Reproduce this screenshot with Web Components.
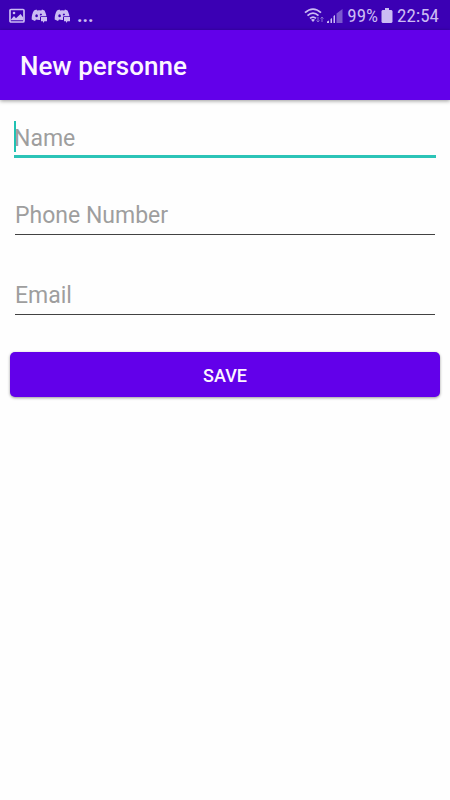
<!DOCTYPE html>
<html lang="en">
<head>
<meta charset="utf-8">
<meta name="viewport" content="width=device-width, initial-scale=1">
<title>New personne</title>
<style>
  body { margin: 0; min-height: 100vh; background: #fefefe; font-family: Roboto, "Noto Sans", sans-serif; }
</style>
</head>
<body>
<contact-screen></contact-screen>
<script>
const define = (name, html, setup) => customElements.define(name, class extends HTMLElement {
  constructor() {
    super();
    const t = document.createElement('template');
    t.innerHTML = html;
    this.attachShadow({ mode: 'open' }).append(t.content.cloneNode(true));
  }
  connectedCallback() { if (setup) setup(this, this.shadowRoot); }
});

define('chat-icon', `
  <style>:host { display: block; } svg { display: block; }</style>
  <svg width="17" height="14" viewBox="0 0 17 14" aria-hidden="true">
    <path fill="#cbbcf3" fill-rule="evenodd" d="M5.4 .5 3 1.4C1.5 3.600.6 6.700.7 10.400l3.300 1.700 1-1.500c1.400.4 2.700.5 4 .4V8.500C9 7.700 9.600 7.200 10.400 7.200h5C15.200 5.200 14.500 3.400 13.500 1.400L11 .5l-.7 1.100a10 10 0 0 0-4.200 0zM5.600 5.300a1.300 1.500 0 1 0 0 3 1.300 1.500 0 0 0 0-3zM10 4.600a1.200 1.300 0 0 0-1 2l2-.7A1.300 1.300 0 0 0 10 4.600z"/>
    <path fill="#cbbcf3" d="M10 8H16v4.200h-2.500L12 14v-1.800H10z"/>
  </svg>`);

define('status-bar', `
  <style>
    :host { display: flex; align-items: center; justify-content: space-between; box-sizing: border-box; height: 30px; padding: 1px 11px 0 9px; background: #3b00b4; color: #cbbcf3; font-family: "Roboto Condensed", Roboto, sans-serif; font-size: 19px; line-height: 20px; }
    .side { display: flex; align-items: center; }
    .left { gap: 6px; }
    .dots { font-weight: 700; }
    svg { display: block; }
    .signal { margin: 0 4px 0 2px; }
    .battery { margin: 0 4px 0 3px; }
  </style>
  <div class="side left">
    <svg width="16" height="16" viewBox="0 0 16 16" aria-hidden="true">
      <rect x="1" y="1.500" width="14" height="12.500" rx="1" fill="none" stroke="#cbbcf3" stroke-width="1.700"/>
      <path fill="#cbbcf3" d="M2 11.500 5 8l2 2.300L11.500 6l2.700 3.500V12.300H2z"/>
      <circle cx="5" cy="5" r="1.300" fill="#cbbcf3"/>
    </svg>
    <chat-icon></chat-icon>
    <chat-icon></chat-icon>
    <span class="dots">...</span>
  </div>
  <div class="side">
    <svg width="21" height="16" viewBox="0 0 21 16" aria-hidden="true" fill="none" stroke="#cbbcf3">
      <path stroke-width="1.800" d="M1 4.700Q9 -2.500 17 4.700M3.500 7.600Q9 2.700 14.500 7.600M6 10.400Q9 7.800 12 10.400"/>
      <path fill="#cbbcf3" stroke="none" d="m7 11.800q2-1.500 4 0L9 14z"/>
      <path stroke="#886bd4" stroke-width="1" d="M14 9v5M12.500 12.500 14 14l1.500-1.500M18 14V9M16.500 10.500 18 9l1.500 1.500"/>
    </svg>
    <svg class="signal" width="16" height="16" viewBox="0 0 16 16" aria-hidden="true">
      <path fill="#cbbcf3" d="M0 13.500 2 12.500V15H0zM3.500 11 5 10v5H3.500zM6.500 8 8 7v8H6.500z"/>
      <path fill="#7a58ce" d="M9.500 5.500 15.500 1v14h-6z"/>
    </svg>
    <span>99%</span>
    <svg class="battery" width="12" height="16" viewBox="0 0 12 16" aria-hidden="true">
      <path fill="#cbbcf3" d="M4 0h4v2h2.500l1 1v11l-1 1h-9l-1-1V3l1-1H4z"/>
    </svg>
    <span>22:54</span>
  </div>`);

define('app-bar', `
  <style>
    :host { display: flex; align-items: center; height: 70px; padding: 0 20px; background: #6200ea; color: #fcf5ff; box-shadow: 0 1px 4px rgba(0,0,0,.4); }
    h1 { margin: 0; padding-top: 1px; font-size: 26px; line-height: 30px; font-weight: 500; }
  </style>
  <h1><slot></slot></h1>`);

define('text-field', `
  <style>
    :host { display: block; position: relative; margin: 0 5px; }
    input { display: block; box-sizing: border-box; width: 100%; height: 46px; margin: 0; padding: 12px 0 5px; border: 0; border-bottom: 1px solid #424242; border-radius: 0; outline: 0; background: transparent; color: #212121; font: 400 23px/28px Roboto, sans-serif; }
    input::placeholder { color: #9e9e9e; opacity: 1; }
    .caret { display: none; position: absolute; left: 0; top: 9px; width: 2px; height: 31px; background: #1fc2b3; }
    :host([active]) { margin: 0 4px -3px; }
    :host([active]) input { padding: 12px 0 3px; border-bottom: 3px solid #2cc4b7; caret-color: transparent; }
    :host([active]) .caret { display: block; }
  </style>
  <input><span class="caret"></span>`, (el, root) => {
  const input = root.querySelector('input');
  input.type = el.getAttribute('type') || 'text';
  input.placeholder = el.getAttribute('label');
  input.setAttribute('aria-label', el.getAttribute('label'));
});

define('action-button', `
  <style>
    :host { display: block; margin-top: 3px; }
    button { display: block; width: 100%; height: 45px; padding: 2px 0 0; border: 0; border-radius: 5px; background: #6200ea; color: #fcf5ff; box-shadow: 0 1px 3px rgba(0,0,0,.4); font: 500 18px/24px Roboto, sans-serif; text-transform: uppercase; }
  </style>
  <button type="button"><slot></slot></button>`);

define('contact-screen', `
  <style>
    :host { display: block; }
    main { display: flex; flex-direction: column; gap: 34px; padding: 12px 10px; }
  </style>
  <status-bar></status-bar>
  <app-bar>New personne</app-bar>
  <main>
    <text-field label="Name" active></text-field>
    <text-field label="Phone Number" type="tel"></text-field>
    <text-field label="Email" type="email"></text-field>
    <action-button>Save</action-button>
  </main>`);
</script>
</body>
</html>
